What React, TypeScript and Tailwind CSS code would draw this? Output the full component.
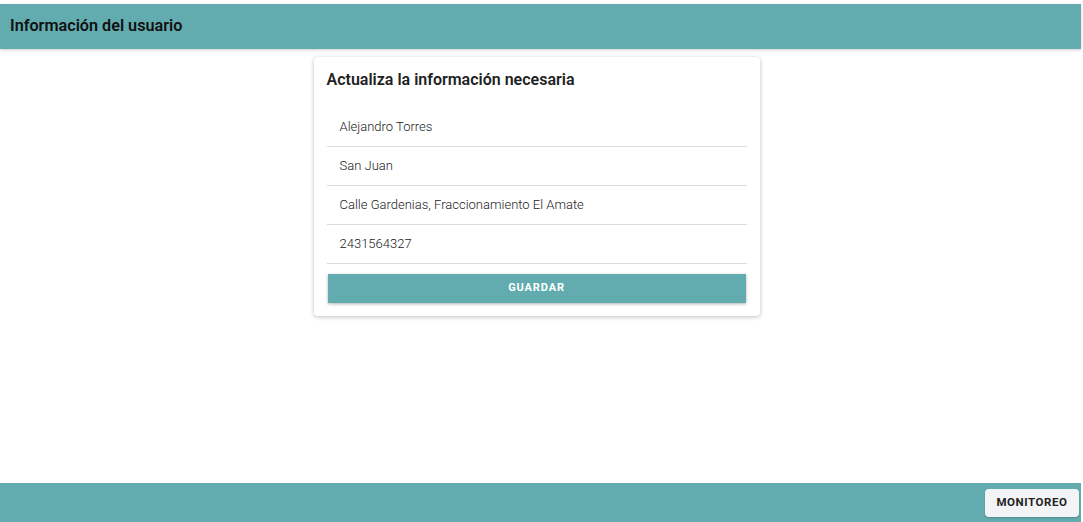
import React from "react"

const fields = [
  "Alejandro Torres",
  "San Juan",
  "Calle Gardenias, Fraccionamiento El Amate",
  "2431564327",
]

export default function App() {
  return (
    <div
      className="flex h-[522px] w-full flex-col bg-white pr-[2px] pt-[4px]"
      style={{ fontFamily: "Roboto, 'Noto Sans', sans-serif" }}
    >
      {/* Top bar */}
      <header className="flex h-[45px] shrink-0 items-center bg-[#62acaf] px-[10px] shadow-[0_1px_3px_rgba(0,0,0,0.2)]">
        <h1 className="text-[16.2px] font-semibold text-[#111]">Información del usuario</h1>
      </header>

      {/* Form */}
      <main className="flex flex-1 justify-center pr-[8px] pt-[8px]">
        <div className="flex h-[259px] w-[446px] flex-col rounded-[4px] bg-white px-[13px] pt-[13px] shadow-[0_1px_4px_rgba(0,0,0,0.25)]">
          <h2 className="text-[16px] font-semibold leading-[20px] text-[#222]">Actualiza la información necesaria</h2>
          <div className="mt-[18px] flex flex-col">
            {fields.map((f) => (
              <div
                key={f}
                className="flex h-[39px] items-center border-b border-[#dcdcdc] px-[13px] text-[13px] font-light text-[#222]"
              >
                {f}
              </div>
            ))}
          </div>
          <button className="mx-[1px] mt-[10px] h-[29px] bg-[#62acaf] text-[11px] font-bold tracking-[0.08em] text-white shadow-[0_1px_3px_rgba(0,0,0,0.3)]">
            GUARDAR
          </button>
        </div>
      </main>

      {/* Bottom bar */}
      <footer className="flex h-[39px] shrink-0 items-center justify-end bg-[#62acaf] pr-[2px]">
        <button className="mt-[1px] h-[28px] w-[94px] rounded-[4px] bg-[#f3f4f6] text-[11.5px] font-bold tracking-[0.05em] text-[#222] shadow-[0_1px_2px_rgba(0,0,0,0.2)]">
          MONITOREO
        </button>
      </footer>
    </div>
  )
}
